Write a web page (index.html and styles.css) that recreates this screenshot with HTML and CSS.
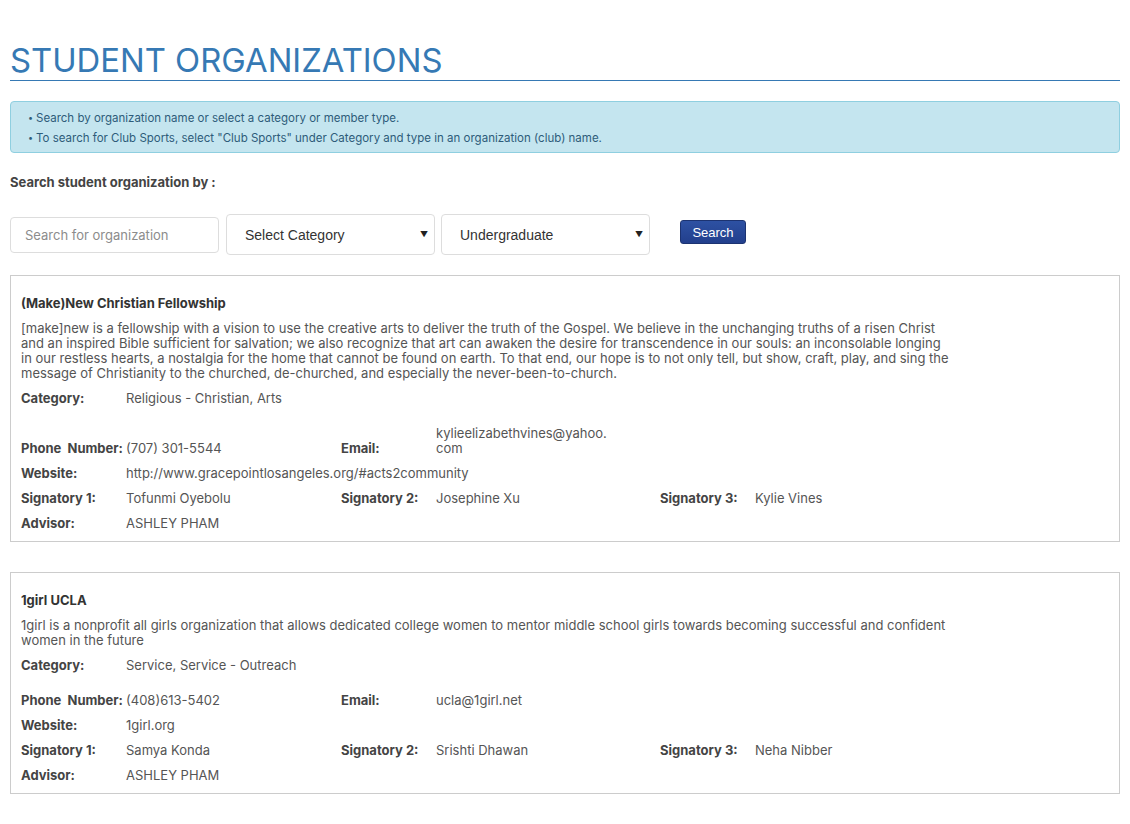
FILE: index.html
```html
<!DOCTYPE html>
<html lang="en">
<head>
<meta charset="utf-8">
<title>Student Organizations</title>
<link rel="stylesheet" href="styles.css">
</head>
<body>
<div class="page">
  <h1 class="page-title">STUDENT ORGANIZATIONS</h1>

  <div class="alert">
    <p class="alert-line"><span class="dot">•</span>Search by organization name or select a category or member type.</p>
    <p class="alert-line"><span class="dot">•</span>To search for Club Sports, select "Club Sports" under Category and type in an organization (club) name.</p>
  </div>

  <p class="search-label">Search student organization by :</p>

  <form class="search-row">
    <input class="search-input" type="text" placeholder="Search for organization">
    <div class="select-wrap">
      <select class="select"><option>Select Category</option></select>
    </div>
    <div class="select-wrap">
      <select class="select"><option>Undergraduate</option></select>
    </div>
    <button class="search-btn" type="button">Search</button>
  </form>

  <div class="card">
    <h2 class="org-title">(Make)New Christian Fellowship</h2>
    <p class="org-desc">[make]new is a fellowship with a vision to use the creative arts to deliver the truth of the Gospel. We believe in the unchanging truths of a risen Christ and an inspired Bible sufficient for salvation; we also recognize that art can awaken the desire for transcendence in our souls: an inconsolable longing in our restless hearts, a nostalgia for the home that cannot be found on earth. To that end, our hope is to not only tell, but show, craft, play, and sing the message of Christianity to the churched, de-churched, and especially the never-been-to-church.</p>
    <div class="fields">
      <span class="lbl cat">Category:</span><span class="val cat span5">Religious - Christian, Arts</span>
      <span class="lbl bottom">Phone&nbsp; Number:</span><span class="val bottom">(707) 301-5544</span>
      <span class="lbl bottom">Email:</span><span class="val email">kylieelizabethvines@yahoo.<wbr>com</span><span class="spacer"></span><span class="spacer"></span>
      <span class="lbl">Website:</span><span class="val span5">http://www.gracepointlosangeles.org/#acts2community</span>
      <span class="lbl">Signatory 1:</span><span class="val">Tofunmi Oyebolu</span>
      <span class="lbl">Signatory 2:</span><span class="val">Josephine Xu</span>
      <span class="lbl">Signatory 3:</span><span class="val">Kylie Vines</span>
      <span class="lbl">Advisor:</span><span class="val span5">ASHLEY PHAM</span>
    </div>
  </div>

  <div class="card">
    <h2 class="org-title">1girl UCLA</h2>
    <p class="org-desc">1girl is a nonprofit all girls organization that allows dedicated college women to mentor middle school girls towards becoming successful and confident women in the future</p>
    <div class="fields">
      <span class="lbl cat">Category:</span><span class="val cat span5">Service, Service - Outreach</span>
      <span class="lbl bottom">Phone&nbsp; Number:</span><span class="val bottom">(408)613-5402</span>
      <span class="lbl bottom">Email:</span><span class="val email">ucla@1girl.net</span><span class="spacer"></span><span class="spacer"></span>
      <span class="lbl">Website:</span><span class="val span5">1girl.org</span>
      <span class="lbl">Signatory 1:</span><span class="val">Samya Konda</span>
      <span class="lbl">Signatory 2:</span><span class="val">Srishti Dhawan</span>
      <span class="lbl">Signatory 3:</span><span class="val">Neha Nibber</span>
      <span class="lbl">Advisor:</span><span class="val span5">ASHLEY PHAM</span>
    </div>
  </div>
</div>
</body>
</html>
```
FILE: styles.css
```css
* { box-sizing: border-box; }

body {
  margin: 0;
  background: #ffffff;
  font-family: "Inter", "Noto Sans", sans-serif;
  font-size: 13px;
  color: #555555;
}

.page {
  padding: 0 10px 40px;
}

.page-title {
  margin: 40px 0 0;
  font-size: 32.8px;
  line-height: 40px;
  font-weight: 400;
  color: #3679b4;
  border-bottom: 1px solid #3679b4;
}

.alert {
  margin-top: 20px;
  padding: 6px 10px 4px 17px;
  background: #c4e5ef;
  border: 1px solid #8fcfe0;
  border-radius: 4px;
}

.alert-line {
  margin: 0;
  font-size: 11.5px;
  line-height: 20px;
  color: #2e5c7a;
}

.dot {
  display: inline-block;
  width: 8px;
  font-size: 9px;
  line-height: 10px;
  vertical-align: top;
  padding-top: 5px;
}

.search-label {
  margin: 21px 0 0;
  font-size: 13px;
  line-height: 16px;
  font-weight: 700;
  color: #444444;
}

.search-row {
  margin: 24px 0 0;
  display: flex;
  align-items: center;
}

.search-input {
  width: 209px;
  height: 36px;
  padding: 0 14px;
  border: 1px solid #dddddd;
  border-radius: 4px;
  font-family: "Inter", sans-serif;
  font-size: 13px;
  color: #555;
  outline: none;
}

.search-input::placeholder {
  color: #8c8c8c;
}

.select-wrap {
  position: relative;
  width: 209px;
  height: 41px;
  margin-left: 7px;
}

.select-wrap + .select-wrap {
  margin-left: 6px;
}

.select-wrap::after {
  content: "\25BC";
  position: absolute;
  right: 7px;
  top: 15px;
  font-size: 8px;
  line-height: 10px;
  color: #222;
  pointer-events: none;
}

.select {
  appearance: none;
  -webkit-appearance: none;
  width: 100%;
  height: 100%;
  padding: 0 24px 0 18px;
  border: 1px solid #dddddd;
  border-radius: 4px;
  background: #ffffff;
  font-family: "Liberation Sans", Arial, sans-serif;
  font-size: 14px;
  color: #333333;
  outline: none;
}

.search-btn {
  margin: 0 0 5px 30px;
  width: 66px;
  height: 24px;
  padding: 0;
  border: 1px solid #1c3371;
  border-radius: 3px;
  background: linear-gradient(#2d51a3, #223f8c);
  color: #ffffff;
  font-family: "Liberation Sans", Arial, sans-serif;
  font-size: 13px;
}

.card {
  margin-top: 20px;
  padding: 20px 10px 10px;
  border: 1px solid #cccccc;
}

.card + .card {
  margin-top: 30px;
}

.org-title {
  margin: 0;
  font-size: 13px;
  line-height: 15px;
  font-weight: 700;
  color: #333333;
}

.org-desc {
  margin: 10px 0 0;
  max-width: 930px;
  font-size: 13px;
  line-height: 15px;
  color: #555555;
}

.fields {
  margin-top: 10px;
  display: grid;
  grid-template-columns: 105px 215px 95px 224px 95px 1fr;
  row-gap: 10px;
  line-height: 15px;
}

.lbl {
  font-weight: 700;
  color: #444444;
  white-space: nowrap;
}

.val {
  color: #555555;
}

.span5 {
  grid-column: span 5;
}

.cat {
  margin-bottom: 10px;
}

.bottom {
  align-self: end;
}

.email {
  max-width: 185px;
}
```
